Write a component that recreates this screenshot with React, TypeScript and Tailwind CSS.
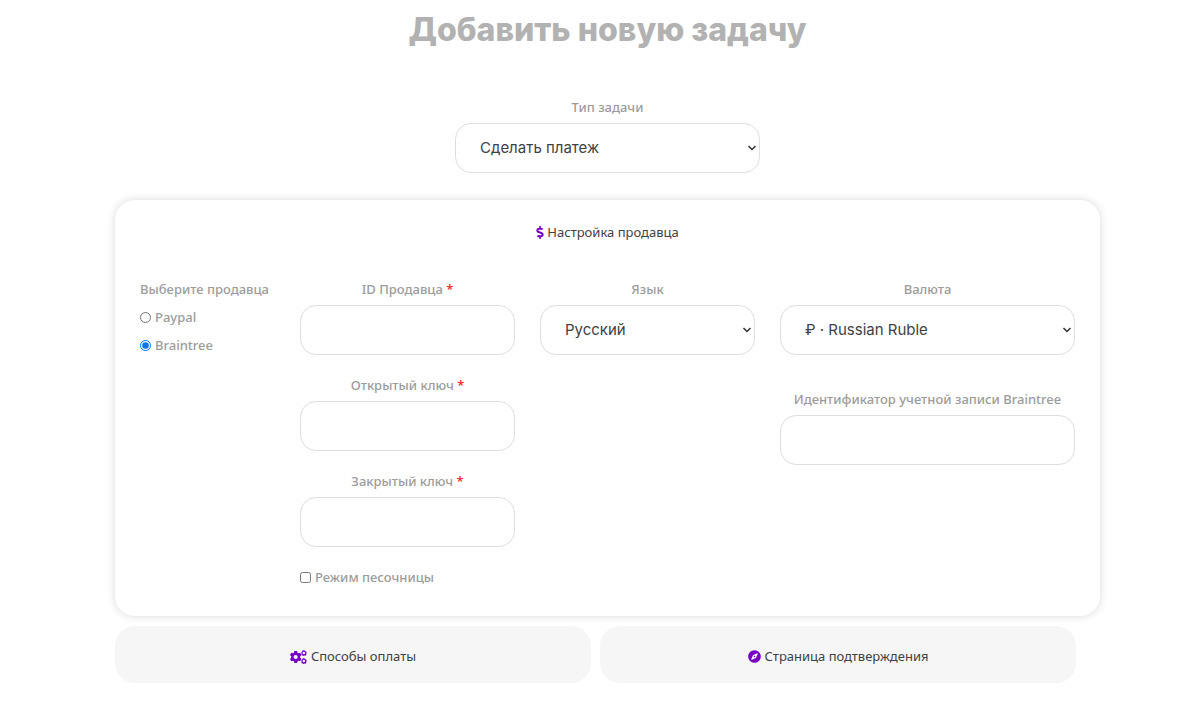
import type { ReactNode } from "react"
import { FaCompass, FaDollarSign } from "react-icons/fa"

const labelClass = "mb-[6px] block text-center text-[13px] leading-5 font-medium text-[#9c9c9c]"
const fieldClass =
  "block h-[50px] w-full rounded-2xl border border-[#dedede] bg-white font-['Inter',sans-serif] text-[15px] text-[#404145]"

function TextField({ id, label, required }: { id: string; label: string; required?: boolean }) {
  return (
    <div>
      <label htmlFor={id} className={labelClass}>
        {label}
        {required && <span className="text-[#ff2020]"> *</span>}
      </label>
      <input id={id} type="text" className={`${fieldClass} px-6`} />
    </div>
  )
}

function SelectField({ id, label, option }: { id: string; label: string; option: string }) {
  return (
    <div>
      <label htmlFor={id} className={labelClass}>
        {label}
      </label>
      <div className="relative">
        <select id={id} className={`${fieldClass} appearance-none px-6`}>
          <option>{option}</option>
        </select>
        <svg
          viewBox="0 0 10 6"
          className="pointer-events-none absolute top-[22px] right-[3px] h-[6px] w-[10px]"
          fill="none"
          stroke="#303030"
          strokeWidth="1.5"
        >
          <path d="M1.5 1 5 4.5 8.5 1" />
        </svg>
      </div>
    </div>
  )
}

function CogsIcon() {
  return (
    <svg viewBox="0 0 34 28" className="h-[14px] w-[17px] shrink-0" fill="currentColor" fillRule="evenodd">
      <path d="M8.6 2h5.6l.8 3.4 2 1.1 3.3-1 2.6 4.6-2.5 2.5v2.8l2.5 2.5-2.6 4.6-3.3-1-2 1.1-.8 3.4H8.6l-.8-3.4-2-1.1-3.3 1L0 17.9l2.4-2.5v-2.8L0 10.1l2.5-4.6 3.3 1 2-1.1zM11.4 9.8a4.2 4.2 0 1 0 0 8.4 4.2 4.2 0 0 0 0-8.4z" />
      <path d="M25.4.6h4l.7 1.8 1.9.3 1.6 3-1.2 1.5.6 1.6-2 2.5-1.7-.3-1.9 1.1-1.6-1.2-2 .2-1.2-2.9.6-1.6-.6-1.9 2-2.4zM27.7 3.4a2.5 2.5 0 1 0 0 5 2.5 2.5 0 0 0 0-5z" />
      <path d="M25.4 16.6h4l.7 1.8 1.9.3 1.6 3-1.2 1.5.6 1.6-2 2.5-1.7-.3-1.9 1.1-1.6-1.2-2 .2-1.2-2.9.6-1.6-.6-1.9 2-2.4zM27.7 19.4a2.5 2.5 0 1 0 0 5 2.5 2.5 0 0 0 0-5z" />
    </svg>
  )
}

function SectionButton({ icon, children }: { icon: ReactNode; children: ReactNode }) {
  return (
    <button
      type="button"
      className="flex h-[57px] flex-1 items-center justify-center gap-1 rounded-[20px] bg-[#f6f6f6] pt-1 text-[13px] text-[#404145]"
    >
      <span className="text-[#7700c7]">{icon}</span>
      {children}
    </button>
  )
}

export default function App() {
  return (
    <main lang="ru" className="min-h-screen bg-white pr-[100px] pl-[115px] font-['Noto_Sans',sans-serif]">
      <h1 className="pt-[10px] text-center font-['Inter',sans-serif] text-[32px] leading-10 font-extrabold text-[#b2b2b2]">
        Добавить новую задачу
      </h1>

      <div className="mx-auto mt-[47px] w-full max-w-[305px]">
        <SelectField id="task-type" label="Тип задачи" option="Сделать платеж" />
      </div>

      <section className="mt-[27px] rounded-[20px] bg-white px-[25px] pt-[22px] pb-[29px] shadow-[0_0_10px_rgba(0,0,0,0.15)]">
        <h2 className="flex items-center justify-center gap-[3px] text-[13px] leading-5 text-[#404145]">
          <FaDollarSign className="h-[13px] w-2 text-[#7700c7]" />
          Настройка продавца
        </h2>

        <div className="mt-[37px] grid grid-cols-[135fr_215fr_215fr_295fr] gap-x-[25px]">
          <fieldset className="flex min-w-0 flex-col gap-2 text-[13px] leading-5 font-medium text-[#9c9c9c]">
            <legend className="mb-2 whitespace-nowrap">Выберите продавца</legend>
            <label className="flex items-center gap-1">
              <input type="radio" name="merchant" value="paypal" className="size-[11px]" />
              Paypal
            </label>
            <label className="flex items-center gap-1">
              <input type="radio" name="merchant" value="braintree" defaultChecked className="size-[11px]" />
              Braintree
            </label>
          </fieldset>

          <div className="flex flex-col gap-5">
            <TextField id="merchant-id" label="ID Продавца" required />
            <TextField id="public-key" label="Открытый ключ" required />
            <TextField id="private-key" label="Закрытый ключ" required />
            <label className="flex items-center gap-1 text-[13px] leading-5 font-medium text-[#9c9c9c]">
              <input type="checkbox" className="size-[11px]" />
              Режим песочницы
            </label>
          </div>

          <SelectField id="language" label="Язык" option="Русский" />

          <div className="flex flex-col gap-[34px]">
            <SelectField id="currency" label="Валюта" option="₽ · Russian Ruble" />
            <TextField id="account-id" label="Идентификатор учетной записи Braintree" />
          </div>
        </div>
      </section>

      <div className="mt-[10px] mr-6 flex gap-[9px]">
        <SectionButton icon={<CogsIcon />}>Способы оплаты</SectionButton>
        <SectionButton icon={<FaCompass className="size-[13px]" />}>Страница подтверждения</SectionButton>
      </div>
    </main>
  )
}
